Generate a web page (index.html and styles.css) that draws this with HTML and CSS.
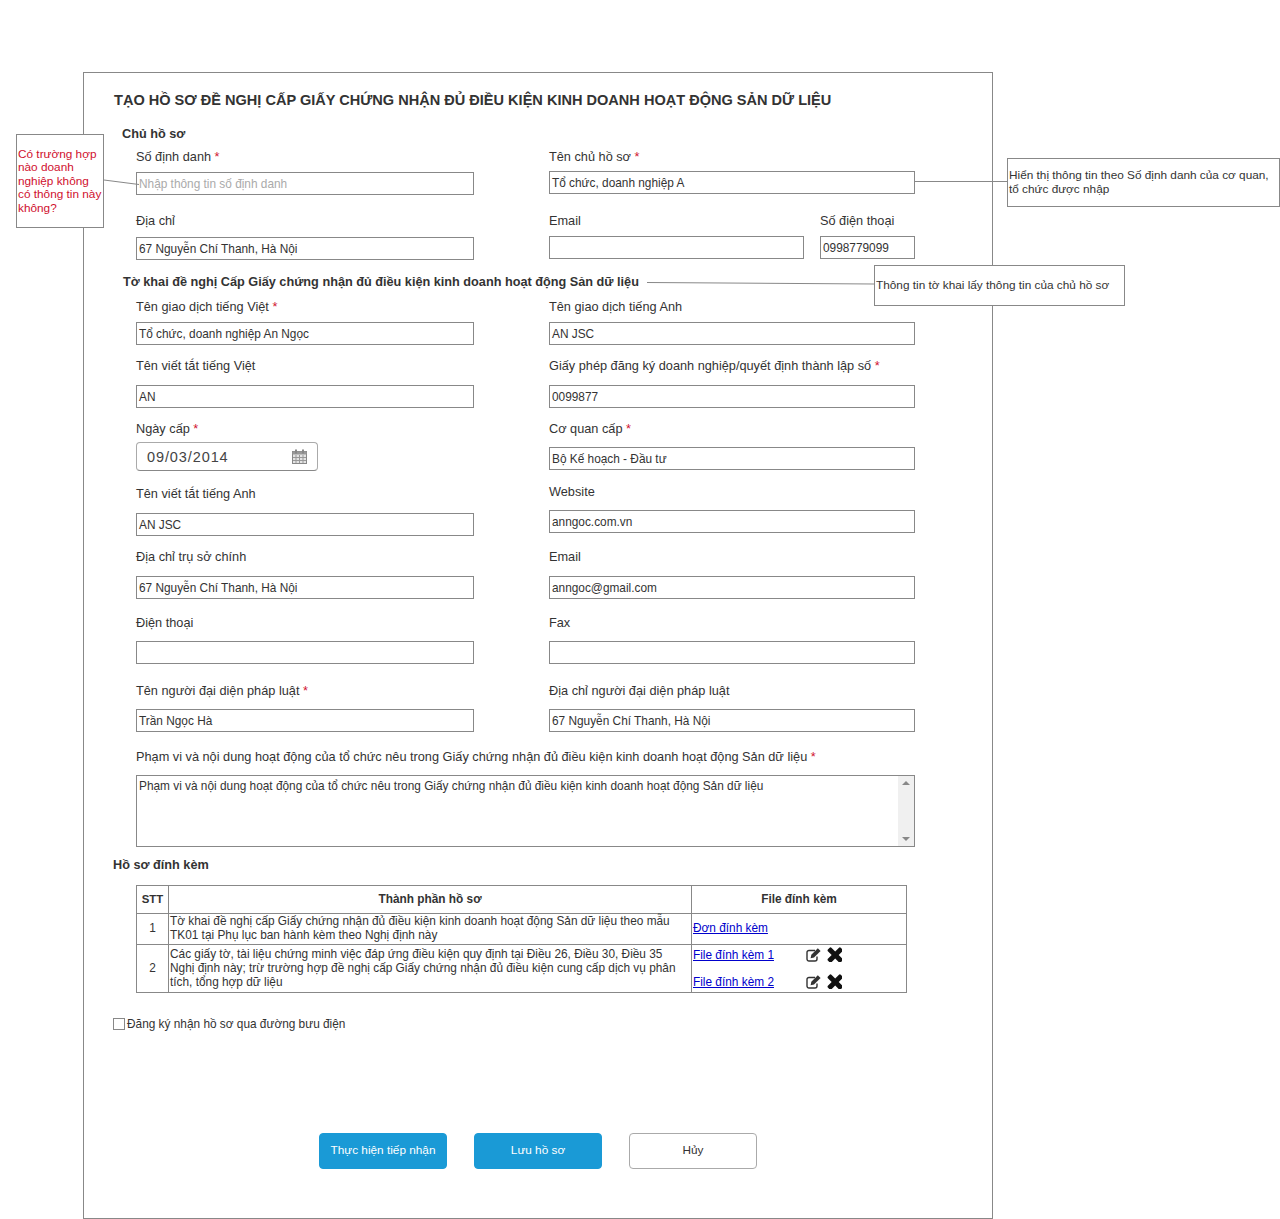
FILE: index.html
```html
<!DOCTYPE html>
<html>
<head>
<meta charset="utf-8">
<title>Tạo hồ sơ</title>
<link rel="stylesheet" href="styles.css">
</head>
<body>
<div class="panel">
  <h1 class="title">TẠO HỒ SƠ ĐỀ NGHỊ CẤP GIẤY CHỨNG NHẬN ĐỦ ĐIỀU KIỆN KINH DOANH HOẠT ĐỘNG SẢN DỮ LIỆU</h1>

  <h2 class="sub first">Chủ hồ sơ</h2>
  <div class="row m6">
    <div class="field"><label>Số định danh <i>*</i></label><div class="box ph">Nhập thông tin số định danh</div></div>
    <div class="field g7"><label>Tên chủ hồ sơ <i>*</i></label><div class="box">Tổ chức, doanh nghiệp A</div></div>
  </div>
  <div class="row m17">
    <div class="field g9"><label>Địa chỉ</label><div class="box">67 Nguyễn Chí Thanh, Hà Nội</div></div>
    <div class="split">
      <div class="field g8 grow"><label>Email</label><div class="box"></div></div>
      <div class="field g8 phone"><label>Số điện thoại</label><div class="box">0998779099</div></div>
    </div>
  </div>

  <h2 class="sub second">Tờ khai đề nghị Cấp Giấy chứng nhận đủ điều kiện kinh doanh hoạt động Sản dữ liệu</h2>
  <div class="row m8">
    <div class="field"><label>Tên giao dịch tiếng Việt <i>*</i></label><div class="box">Tổ chức, doanh nghiệp An Ngọc</div></div>
    <div class="field"><label>Tên giao dịch tiếng Anh</label><div class="box">AN JSC</div></div>
  </div>
  <div class="row m12">
    <div class="field g12"><label>Tên viết tắt tiếng Việt</label><div class="box">AN</div></div>
    <div class="field g12"><label>Giấy phép đăng ký doanh nghiệp/quyết định thành lập số <i>*</i></label><div class="box">0099877</div></div>
  </div>
  <div class="row m12">
    <div class="field g6">
      <label>Ngày cấp <i>*</i></label>
      <div class="date">
        <span>09/03/2014</span>
        <svg class="cal" width="15" height="15" viewBox="0 0 15 15">
          <rect x="0.5" y="2.5" width="14" height="12" fill="#e4e4e4" stroke="#888"/>
          <rect x="0.5" y="2.5" width="14" height="3" fill="#999"/>
          <rect x="3" y="0.5" width="2" height="4" fill="#888"/>
          <rect x="10" y="0.5" width="2" height="4" fill="#888"/>
          <path d="M4 6v8M7.500 6v8M11 6v8M1 8.500h13M1 11.500h13" stroke="#999" fill="none"/>
        </svg>
      </div>
    </div>
    <div class="field g11"><label>Cơ quan cấp <i>*</i></label><div class="box">Bộ Kế hoạch - Đầu tư</div></div>
  </div>
  <div class="row m12">
    <div class="field g12 drop2"><label>Tên viết tắt tiếng Anh</label><div class="box">AN JSC</div></div>
    <div class="field g11"><label>Website</label><div class="box">anngoc.com.vn</div></div>
  </div>
  <div class="row m12">
    <div class="field g12"><label>Địa chỉ trụ sở chính</label><div class="box">67 Nguyễn Chí Thanh, Hà Nội</div></div>
    <div class="field g12"><label>Email</label><div class="box">anngoc@gmail.com</div></div>
  </div>
  <div class="row m15">
    <div class="field g11"><label>Điện thoại</label><div class="box"></div></div>
    <div class="field g11"><label>Fax</label><div class="box"></div></div>
  </div>
  <div class="row m18">
    <div class="field g11"><label>Tên người đại diện pháp luật <i>*</i></label><div class="box">Trần Ngọc Hà</div></div>
    <div class="field g11"><label>Địa chỉ người đại diện pháp luật</label><div class="box">67 Nguyễn Chí Thanh, Hà Nội</div></div>
  </div>
  <div class="field wide g11 m16">
    <label>Phạm vi và nội dung hoạt động của tổ chức nêu trong Giấy chứng nhận đủ điều kiện kinh doanh hoạt động Sản dữ liệu <i>*</i></label>
    <div class="area">
      <div class="area-text">Phạm vi và nội dung hoạt động của tổ chức nêu trong Giấy chứng nhận đủ điều kiện kinh doanh hoạt động Sản dữ liệu</div>
      <div class="scroll"><b class="up"></b><b class="down"></b></div>
    </div>
  </div>

  <h2 class="sub third">Hồ sơ đính kèm</h2>
  <table class="files">
    <tr class="head">
      <th class="c-stt">STT</th>
      <th class="c-name">Thành phần hồ sơ</th>
      <th class="c-file">File đính kèm</th>
    </tr>
    <tr class="r1">
      <td class="num">1</td>
      <td>Tờ khai đề nghị cấp Giấy chứng nhận đủ điều kiện kinh doanh hoạt động Sản dữ liệu theo mẫu TK01 tại Phụ lục ban hành kèm theo Nghị định này</td>
      <td><a href="#">Đơn đính kèm</a></td>
    </tr>
    <tr class="r2">
      <td class="num">2</td>
      <td>Các giấy tờ, tài liệu chứng minh việc đáp ứng điều kiện quy định tại Điều 26, Điều 30, Điều 35 Nghị định này; trừ trường hợp đề nghị cấp Giấy chứng nhận đủ điều kiện cung cấp dịch vụ phân tích, tổng hợp dữ liệu</td>
      <td class="stack">
        <div class="attach">
          <a href="#">File đính kèm 1</a>
          <svg class="ic" width="15" height="14" viewBox="0 0 15 14"><path d="M11 8.500v2.500a2 2 0 0 1-2 2H3a2 2 0 0 1-2-2V4.500a2 2 0 0 1 2-2h6" fill="none" stroke="#333" stroke-width="1.400"/><path d="M4.600 10.200l.7-3.400L11.800.3l2.800 2.800L8 9.500z" fill="#333"/></svg>
          <svg class="ic" width="15" height="15" viewBox="70 230 1160 1160"><path d="M1298 1214q0 40-28 68l-136 136q-28 28-68 28t-68-28l-294-294-294 294q-28 28-68 28t-68-28l-136-136q-28-28-28-68t28-68l294-294-294-294q-28-28-28-68t28-68l136-136q28-28 68-28t68 28l294 294 294-294q28-28 68-28t68 28l136 136q28 28 28 68t-28 68l-294 294 294 294q28 28 28 68z" fill="#111"/></svg>
        </div>
        <div class="attach">
          <a href="#">File đính kèm 2</a>
          <svg class="ic" width="15" height="14" viewBox="0 0 15 14"><path d="M11 8.500v2.500a2 2 0 0 1-2 2H3a2 2 0 0 1-2-2V4.500a2 2 0 0 1 2-2h6" fill="none" stroke="#333" stroke-width="1.400"/><path d="M4.600 10.200l.7-3.400L11.800.3l2.800 2.800L8 9.500z" fill="#333"/></svg>
          <svg class="ic" width="15" height="15" viewBox="70 230 1160 1160"><path d="M1298 1214q0 40-28 68l-136 136q-28 28-68 28t-68-28l-294-294-294 294q-28 28-68 28t-68-28l-136-136q-28-28-28-68t28-68l294-294-294-294q-28-28-28-68t28-68l136-136q28-28 68-28t68 28l294 294 294-294q28-28 68-28t68 28l136 136q28 28 28 68t-28 68l-294 294 294 294q28 28 28 68z" fill="#111"/></svg>
        </div>
      </td>
    </tr>
  </table>

  <div class="post"><span class="check"></span>Đăng ký nhận hồ sơ qua đường bưu điện</div>

  <div class="actions">
    <div class="btn primary">Thực hiện tiếp nhận</div>
    <div class="btn primary">Lưu hồ sơ</div>
    <div class="btn">Hủy</div>
  </div>
</div>

<!-- annotations on top of the form -->
<svg class="lines" width="1280" height="300">
  <path d="M104 180L139 184.500M915 181.500H1007M647 282.500L874 284" stroke="#888" fill="none"/>
</svg>
<div class="note note-red">Có trường hợp nào doanh nghiệp không có thông tin này không?</div>
<div class="note note-id">Hiển thị thông tin theo Số định danh của cơ quan, tổ chức được nhập</div>
<div class="note note-form">Thông tin tờ khai lấy thông tin của chủ hồ sơ</div>
</body>
</html>
```

FILE: styles.css
```css
html, body {
    margin: 0;
    padding: 0;
}

body {
    position: relative;
    font-family: "Liberation Sans", Arial, sans-serif;
    color: #333;
    background: #fff;
}

.panel {
    box-sizing: border-box;
    width: 910px;
    margin: 72px 0 0 83px;
    padding: 17px 0 49px 29px;
    border: 1px solid #888;
}

.title {
    height: 20px;
    margin: 0 0 0 1px;
    font-size: 14.550px;
    line-height: 21px;
    font-weight: bold;
    color: #333;
    white-space: nowrap;
}

.sub {
    margin: 0;
    font-size: 12.700px;
    line-height: 16px;
    font-weight: bold;
    color: #333;
}

.first { margin: 16px 0 0 9px; }
.second { margin: 14px 0 0 10px; }
.third { margin: 10px 0 0 0; }

.row {
    display: grid;
    grid-template-columns: 338px 366px;
    column-gap: 75px;
    margin-left: 23px;
}

.split {
    display: flex;
    gap: 16px;
}

.grow { flex: 1; }
.phone { width: 95px; }

.field label {
    display: block;
    height: 16px;
    margin-bottom: 8px;
    font-size: 12.740px;
    line-height: 18px;
    white-space: nowrap;
}

.field label i {
    font-style: normal;
    color: #d0102e;
}

.g6 label { margin-bottom: 6px; }
.g7 label { margin-bottom: 7px; }
.g8 label { margin-bottom: 8px; }
.g9 label { margin-bottom: 9px; }
.g11 label { margin-bottom: 11px; }
.g12 label { margin-bottom: 12px; }
.drop2 { margin-top: 2px; }

.m6 { margin-top: 6px; }
.m8 { margin-top: 8px; }
.m12 { margin-top: 12px; }
.m15 { margin-top: 15px; }
.m16 { margin-top: 16px; }
.m17 { margin-top: 17px; }
.m18 { margin-top: 18px; }

.box {
    box-sizing: border-box;
    height: 23px;
    padding-left: 2px;
    border: 1px solid #888;
    font-size: 11.850px;
    line-height: 22px;
    white-space: nowrap;
}

.ph { color: #aaa; }

.date {
    box-sizing: border-box;
    display: flex;
    align-items: center;
    justify-content: space-between;
    width: 182px;
    height: 29px;
    padding: 0 10px;
    border: 1px solid #aaa;
    border-bottom-color: #888;
    border-radius: 4px;
    font-size: 14.500px;
    letter-spacing: 0.900px;
    color: #444;
}

.wide {
    margin-left: 23px;
    width: 779px;
}

.area {
    box-sizing: border-box;
    display: flex;
    justify-content: space-between;
    height: 72px;
    border: 1px solid #888;
}

.area-text {
    padding: 3px 0 0 2px;
    font-size: 11.850px;
    line-height: 14px;
}

.scroll {
    display: flex;
    flex-direction: column;
    justify-content: space-between;
    align-items: center;
    width: 16px;
    padding: 5px 0;
    background: #f0f0f0;
}

.scroll b {
    width: 0;
    height: 0;
    border-left: 4px solid transparent;
    border-right: 4px solid transparent;
}

.up { border-bottom: 4px solid #888; }
.down { border-top: 4px solid #888; }

.files {
    table-layout: fixed;
    width: 771px;
    height: 108px;
    margin: 12px 0 0 23px;
    border-collapse: collapse;
    font-size: 11.850px;
    line-height: 14px;
}

.files th,
.files td {
    padding: 0 1px 2px;
    border: 1px solid #888;
    vertical-align: middle;
}

.files th {
    font-weight: bold;
    text-align: center;
}

.files .c-stt { width: 29px; font-size: 11.400px; }
.c-file { width: 212px; }
.head { height: 28px; }
.r1 { height: 31px; }
.r2 { height: 48px; }
.num { text-align: center; }

.files .stack { padding-bottom: 1px; }

.files a {
    color: #00c;
    text-decoration: underline;
}

.attach {
    display: flex;
    align-items: center;
    height: 18px;
}

.attach + .attach { margin-top: 9px; }
.attach a { width: 113px; }
.attach .ic + .ic { margin-left: 6px; }

.post {
    display: flex;
    align-items: center;
    height: 16px;
    margin-top: 23px;
    font-size: 11.850px;
}

.check {
    box-sizing: border-box;
    width: 12px;
    height: 12px;
    margin-right: 2px;
    border: 1px solid #888;
}

.actions {
    display: flex;
    gap: 27px;
    margin: 101px 0 0 206px;
}

.btn {
    box-sizing: border-box;
    width: 128px;
    height: 36px;
    border: 1px solid #aaa;
    border-radius: 4px;
    font-size: 11.800px;
    line-height: 32px;
    text-align: center;
}

.primary {
    border-color: #1a9ad6;
    background: #1a9ad6;
    color: #fff;
}

.lines {
    position: absolute;
    left: 0;
    top: 0;
}

.note {
    position: absolute;
    box-sizing: border-box;
    display: flex;
    align-items: center;
    padding: 1px 0 0 1px;
    border: 1px solid #888;
    background: #fff;
    font-size: 11.800px;
    line-height: 13.600px;
}

.note-red {
    left: 16px;
    top: 134px;
    width: 88px;
    height: 94px;
    color: #d0102e;
}

.note-id {
    left: 1007px;
    top: 158px;
    width: 273px;
    height: 49px;
}

.note-form {
    left: 874px;
    top: 265px;
    width: 251px;
    height: 41px;
}
```
